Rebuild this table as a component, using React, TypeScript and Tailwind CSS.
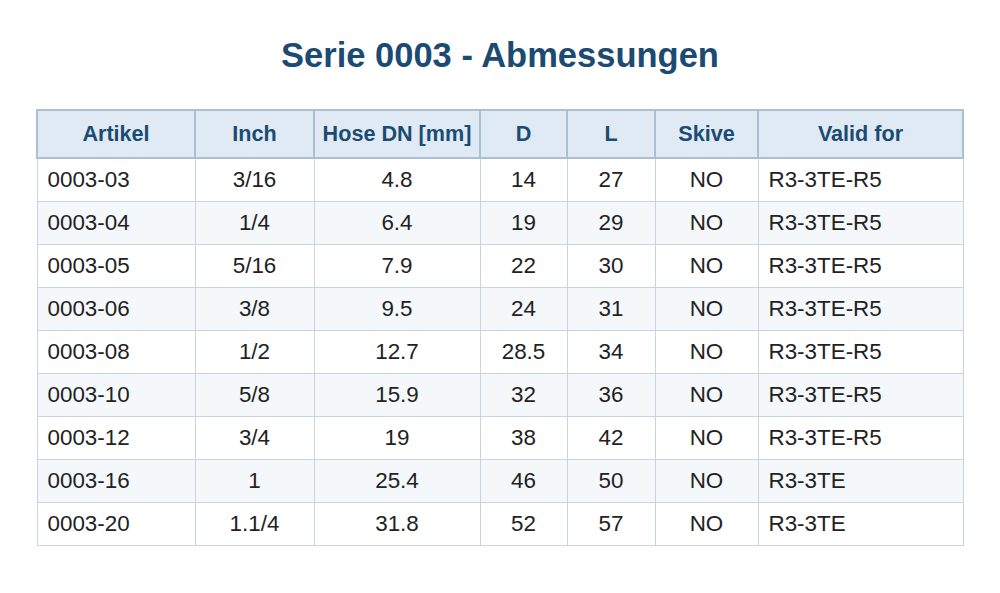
import React from 'react';

const rows = [
  ['0003-03', '3/16', '4.8', '14', '27', 'NO', 'R3-3TE-R5'],
  ['0003-04', '1/4', '6.4', '19', '29', 'NO', 'R3-3TE-R5'],
  ['0003-05', '5/16', '7.9', '22', '30', 'NO', 'R3-3TE-R5'],
  ['0003-06', '3/8', '9.5', '24', '31', 'NO', 'R3-3TE-R5'],
  ['0003-08', '1/2', '12.7', '28.5', '34', 'NO', 'R3-3TE-R5'],
  ['0003-10', '5/8', '15.9', '32', '36', 'NO', 'R3-3TE-R5'],
  ['0003-12', '3/4', '19', '38', '42', 'NO', 'R3-3TE-R5'],
  ['0003-16', '1', '25.4', '46', '50', 'NO', 'R3-3TE'],
  ['0003-20', '1.1/4', '31.8', '52', '57', 'NO', 'R3-3TE'],
];

const headers = ['Artikel', 'Inch', 'Hose DN [mm]', 'D', 'L', 'Skive', 'Valid for'];
const widths = ['w-[158px]', 'w-[119px]', 'w-[166px]', 'w-[87px]', 'w-[88px]', 'w-[103px]', 'w-[205px]'];

const App = () => {
  return (
    <div className="w-full min-h-[593px] bg-white px-[36px] pt-[35px] font-['Liberation_Sans',Arial,sans-serif]">
      <h1 className="text-center text-[34.5px] leading-[40px] font-bold text-[#1b4a72]">
        Serie 0003 - Abmessungen
      </h1>

      <table className="mt-[34px] w-[926px] table-fixed border-collapse">
        <colgroup>
          {widths.map((w, i) => (
            <col key={i} className={w} />
          ))}
        </colgroup>
        <thead>
          <tr className="h-[48px] bg-[#dfeaf5]">
            {headers.map((h) => (
              <th
                key={h}
                className="border-2 border-[#adc0d2] text-center text-[21.6px] font-bold text-[#1b4a72]"
              >
                {h}
              </th>
            ))}
          </tr>
        </thead>
        <tbody>
          {rows.map((r, i) => (
            <tr key={r[0]} className={i % 2 === 1 ? 'h-[43px] bg-[#f4f8fb]' : 'h-[43px] bg-white'}>
              {r.map((c, j) => (
                <td
                  key={j}
                  className={
                    j === 0 || j === 6
                      ? 'border border-[#c8d5e1] px-[10px] text-left text-[22.4px] text-[#222]'
                      : 'border border-[#c8d5e1] text-center text-[22.4px] text-[#222]'
                  }
                >
                  {c}
                </td>
              ))}
            </tr>
          ))}
        </tbody>
      </table>
    </div>
  );
};

export default App;
